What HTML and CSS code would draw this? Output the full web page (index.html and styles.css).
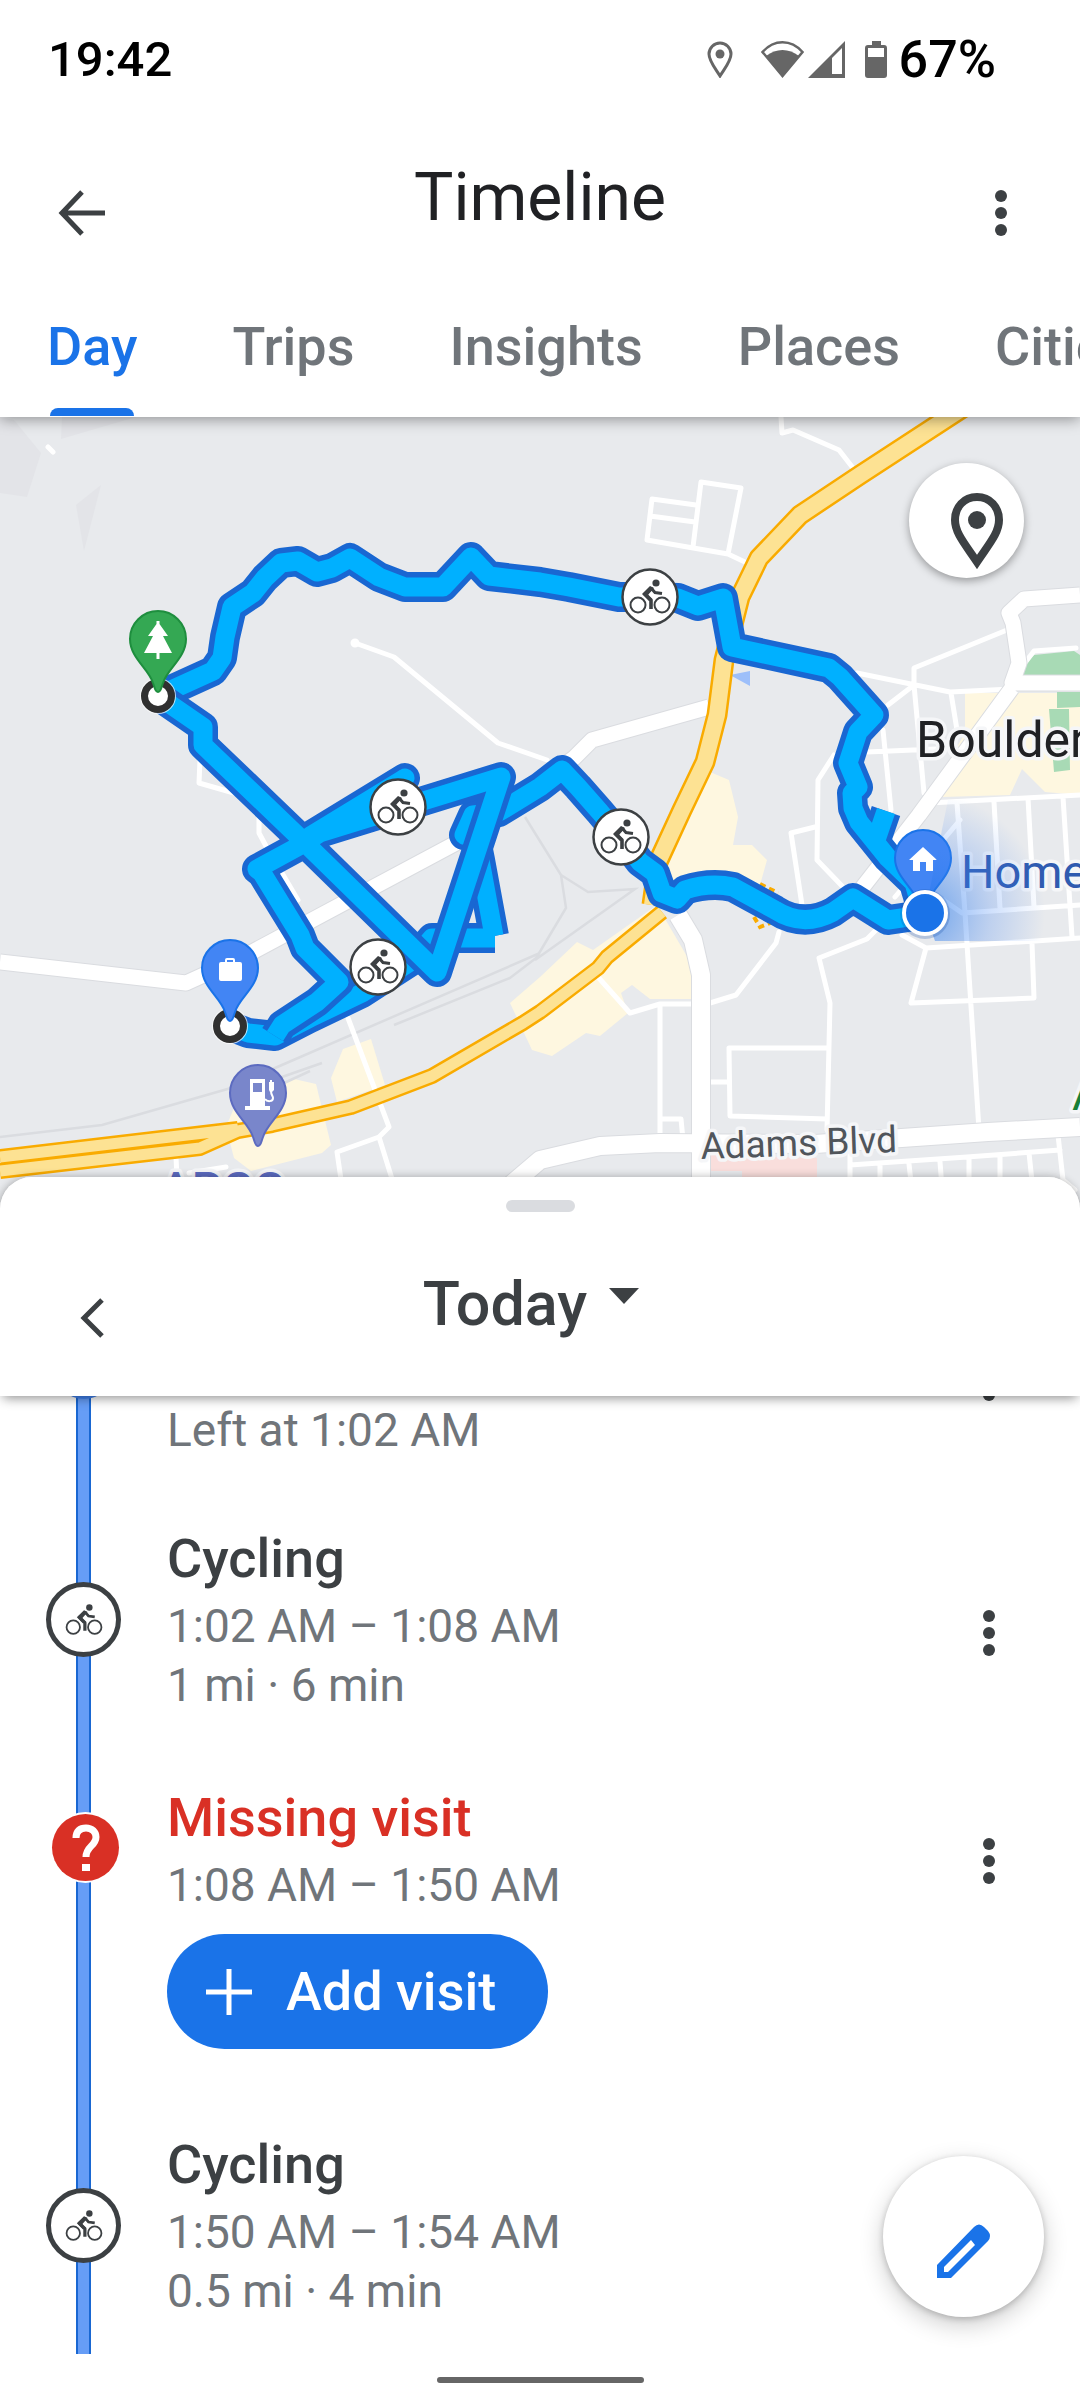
FILE: index.html
```html
<!DOCTYPE html>
<html lang="en">
<head>
	<meta charset="UTF-8">
	<meta name="viewport" content="width=device-width, initial-scale=1">
	<title>Timeline</title>
	<link rel="stylesheet" href="styles.css">
</head>
<body>
	<!-- shared icons -->
	<svg class="defs" width="0" height="0" aria-hidden="true">
		<symbol id="bike" viewBox="-21 -19 42 38">
			<g fill="none" stroke="#3c4043">
				<circle cx="-12" cy="8" r="7.500" stroke-width="2"/>
				<circle cx="12" cy="8" r="7.500" stroke-width="2"/>
				<path d="M2-9L-5-3L1 3V12" stroke-width="3.600" stroke-linejoin="round"/>
				<path d="M1-9L5-4.500L12-3.500" stroke-width="3"/>
			</g>
			<path d="M-8-3L0-11L4-9L-2-2L2 2L-1 4z" fill="#3c4043"/>
			<circle cx="6" cy="-14" r="3.600" fill="#3c4043"/>
		</symbol>
		<symbol id="dots" viewBox="0 0 12 46">
			<circle cx="6" cy="6" r="6"/>
			<circle cx="6" cy="23" r="6"/>
			<circle cx="6" cy="40" r="6"/>
		</symbol>
	</svg>

	<header class="top">
		<div class="status">
			<span class="clock">19:42</span>
			<div class="status-icons">
				<svg class="s-pin" width="26" height="37" viewBox="0 0 26 37"><path d="M13 2C7 2 2 7 2 13C2 20 8 27 13 35C18 27 24 20 24 13C24 7 19 2 13 2z" fill="none" stroke="#666" stroke-width="3"/><circle cx="13" cy="13" r="4.500" fill="#666"/></svg>
				<svg class="s-wifi" width="43" height="37" viewBox="0 0 43 37"><path d="M1.500 11C13-2 30-2 41.500 11L21.500 35z" fill="#fff" stroke="#666" stroke-width="2.500"/><path d="M5 15C15 7 28 7 38 15L21.500 36z" fill="#666"/></svg>
				<svg class="s-signal" width="37" height="37" viewBox="0 0 37 37"><path d="M0 37L37 0V37z" fill="#666"/><path d="M24 17L34 7V33H24z" fill="#fff"/></svg>
				<svg class="s-battery" width="22" height="37" viewBox="0 0 22 37"><path d="M7 0h9v4h3a3 3 0 0 1 3 3v27a3 3 0 0 1-3 3H3a3 3 0 0 1-3-3V7a3 3 0 0 1 3-3h4z" fill="#666"/><path d="M3 7h16v9H3z" fill="#fff"/></svg>
				<span class="percent">67%</span>
			</div>
		</div>
		<div class="appbar">
			<button class="icon-btn back" aria-label="Back">
				<svg width="48" height="46" viewBox="0 0 48 46"><path d="M24 2L4 23L24 44M4 23H47" fill="none" stroke="#3c4043" stroke-width="5"/></svg>
			</button>
			<h1>Timeline</h1>
			<button class="icon-btn more" aria-label="More options"><svg width="12" height="46"><use href="#dots"/></svg></button>
		</div>
		<nav class="tabs">
			<a href="#day" class="active">Day</a>
			<a href="#trips">Trips</a>
			<a href="#insights">Insights</a>
			<a href="#places">Places</a>
			<a href="#cities">Cities</a>
		</nav>
	</header>

	<div class="map">
		<svg class="map-svg" viewBox="0 417 1080 793">
			<defs>
				<path id="pin" d="M0-1C-3-1-3-5-5-10C-9-24-28-35-28-54A28 28 0 0 1 28-54C28-35 9-24 5-10C3-5 3-1 0-1z" stroke-width="2"/>
				<g id="ring">
					<circle r="18" fill="#fff" opacity=".7"/>
					<circle r="13.500" fill="#fff" stroke="#303030" stroke-width="7"/>
				</g>
				<g id="stop">
					<circle r="27.500" fill="#fff" stroke="#3c4043" stroke-width="2.500"/>
					<use href="#bike" x="-21" y="-19" width="42" height="38"/>
				</g>
				<radialGradient id="beam" gradientUnits="userSpaceOnUse" cx="925" cy="913" r="120">
					<stop offset="0" stop-color="#1a73e8" stop-opacity=".6"/>
					<stop offset=".55" stop-color="#4285f4" stop-opacity=".25"/>
					<stop offset="1" stop-color="#4285f4" stop-opacity="0"/>
				</radialGradient>
				<g id="highways" fill="none" stroke-linejoin="round">
					<path class="hw-wide" d="M975 400L860 475L800 515L759 558L740 597L724 660L717 715L705 762L682 810L658 862L652 905"/>
					<path class="hw" d="M662 912L607 957L598 968L540 1012L523 1023L432 1076L351 1107L272 1125L238 1131L200 1148L0 1171M238 1129L0 1157"/>
				</g>
				<g id="routes" fill="none" stroke-linejoin="round">
					<path d="M158 696L213 671L222 658L225 637L232 607L253 593L265 578L281 563L298 561L317 572L332 568L350 558L379 577L405 587L443 587L471 557L489 576L540 582L569 587L619 597L650 597L678 598L698 606L723 598L732 647L829 668L840 677L874 715L858 732L848 763L858 787L852 793L853 808L859 822L888 858L914 883L922 910"/>
					<path d="M876 840L886 811"/>
					<path d="M922 915L888 920L853 898L833 912Q803 928 775 910L733 887Q710 882 685 890L677 899L662 893L655 873L640 862L621 837L600 812L578 787L562 770L540 787L499 812L473 815L464 835L474 830L480 860L494 936"/>
					<path d="M230 1026L248 1033L275 1036L310 1018L362 993L413 960L432 938H495"/>
				</g>
				<path id="zigzag" fill="none" stroke-linejoin="round" d="M275 1036L282 1025L317 1002L339 982L305 948L300 935L262 873L257 869L301 845L405 778L310 836L501 777L437 972L300 838L203 745V727L158 696"/>
			</defs>
			<rect y="417" width="1080" height="793" fill="#e8eaed"/>

			<!-- areas -->
			<path d="M0 417L14 420L41 453L27 497L0 493zM62 417L61 439L136 417zM101 485L76 505L84 551z" fill="#e3e4e8"/>
			<g fill="#fef7e0">
				<path d="M710 772L729 780L738 817L733 845H752L767 860L760 885L660 890L665 850z"/>
				<path d="M657 905L692 965V999H650L632 985L621 993L628 1013L600 1036L586 1033L552 1056L532 1050L510 1003L540 977L577 942L593 950z"/>
				<path d="M294 1079L316 1084L331 1145L322 1153L251 1171L234 1158L226 1127L234 1108z"/>
				<path d="M343 1049L371 1039L385 1085L337 1102L331 1078z"/>
				<path d="M965 693H1080V795L1045 792L1022 769L1010 795L942 797V773L965 733z"/>
			</g>
			<path d="M1034 655L1074 651L1080 655V677L1056 679H1024L1021 675L1025 662zM1057 692H1080V707L1057 708zM1049 709H1069L1070 770L1054 772z" fill="#a8dab5"/>
			<path d="M710 1155L817 1158V1210H742V1171H710z" fill="#f9dedc"/>
			<path d="M730 675L750 671V686z" fill="#9dbffa"/>

			<!-- railway tracks -->
			<path d="M0 1137L102 1125L231 1088L275 1068L540 953M394 1025L510 978L540 955M282 1077L322 1063M282 1084L310 1071M525 817L561 875L566 908L535 960M561 875L588 892L635 889L535 960" fill="none" stroke="#dadce0" stroke-width="2.500"/>

			<!-- small streets -->
			<g class="streets">
				<path d="M781 417L782 433L793 430L839 450L853 468M696 505L652 499L647 540L728 554L747 563M693 547L701 482L741 488L728 554M650 516L695 522"/>
				<path d="M857 673L950 692L1012 689M1007 630L914 668V685L888 705M914 685L924 793M951 693L957 730M883 730L891 810M867 752L936 749M834 755L818 780L817 860L843 887M815 827L791 833L802 905M779 932L776 943L736 995L710 1003"/>
				<path d="M876 930L867 939L819 958L830 1003L827 1130M827 1048H729L730 1116L827 1119M710 1082H729M598 977L630 1013L660 1004H692M660 1004V1140M660 1119H681L683 1140"/>
				<path d="M929 803L1080 795M957 803L965 913L979 1130M994 802L1000 908M1028 798L1034 907M1063 797L1072 937M939 897L962 913L1080 905M902 935L926 948L1080 938M926 948L911 1003L1034 998L1032 943M960 820L895 897"/>
				<path d="M850 1135V1200M850 1165L967 1157L1060 1150M880 1164V1200M909 1164L913 1200M940 1162L943 1200M969 1157V1200M1000 1155V1200M1029 1153L1034 1200M1058 1135L1063 1180L1075 1190"/>
				<path d="M200 760L199 783L234 793M259 817V833L267 848M282 873L298 900M48 447L53 452M355 643L394 657L498 743L547 760M348 1018L389 1127L379 1137L337 1152L344 1200M379 1137L397 1195M176 1157L178 1200M189 1173L226 1167"/>
				<circle cx="355" cy="643" r="2"/>
				<path d="M1024 664L1034 651L1076 648"/>
			</g>

			<!-- main roads: grey casing with the white road on top -->
			<g class="casing">
				<path d="M0 962L186 983L241 958L458 842L574 758L592 740L709 707"/>
				<path class="wide" d="M678 915L693 940L701 975V1210"/>
				<path class="wide" d="M505 1190L540 1160L600 1146L660 1143L815 1144L988 1132L1080 1127"/>
				<path d="M1080 683H1012L1019 663L1013 623L1009 613L1024 599L1080 595M1012 688L919 815L862 888"/>
			</g>
			<g class="road">
				<path d="M0 962L186 983L241 958L458 842L574 758L592 740L709 707"/>
				<path class="wide" d="M678 915L693 940L701 975V1210"/>
				<path class="wide" d="M505 1190L540 1160L600 1146L660 1143L815 1144L988 1132L1080 1127"/>
				<path d="M1080 683H1012L1019 663L1013 623L1009 613L1024 599L1080 595M1012 688L919 815L862 888"/>
			</g>
			<path d="M760 884L778 893M754 917L760 927L773 922" fill="none" stroke="#f9ab00" stroke-width="4" stroke-dasharray="6 4"/>

			<use href="#highways" class="hw-edge"/>
			<use href="#highways" class="hw-fill"/>

			<g class="labels">
				<text x="916" y="757" font-size="50" fill="#202124">Boulder</text>
				<text x="961" y="888" font-size="47" fill="#2f5bb0">Home</text>
				<text x="701" y="1159" font-size="37" fill="#50555b" transform="rotate(-2 701 1159)">Adams Blvd</text>
				<text x="1072" y="1110" font-size="47" fill="#188038">A</text>
				<text x="160" y="1206" font-size="48" font-weight="500" fill="#5c6bc0">ARCO</text>
			</g>

			<!-- recorded path -->
			<use href="#routes" stroke="#1967d2" stroke-width="30"/>
			<use href="#routes" stroke="#00b0ff" stroke-width="19"/>
			<use href="#zigzag" stroke="#1967d2" stroke-width="30"/>
			<use href="#zigzag" stroke="#00b0ff" stroke-width="19"/>

			<use href="#ring" x="158" y="696"/>
			<use href="#ring" x="230" y="1026"/>
			<use href="#stop" x="650" y="597"/>
			<use href="#stop" x="398" y="807"/>
			<use href="#stop" x="378" y="967"/>
			<use href="#stop" x="621" y="837"/>

			<g transform="translate(158 693)">
				<use href="#pin" fill="#34a853" stroke="#1e8e3e"/>
				<path d="M-1.500-72h3v3L10-57H5L14-40H1.500v6h-3v-6H-14L-5-57H-10L-1.500-69z" fill="#fff"/>
			</g>
			<g transform="translate(230 1022)">
				<use href="#pin" fill="#4285f4" stroke="#1a73e8"/>
				<path d="M-9-60h4v-2q0-2 2-2h6q2 0 2 2v2h5q2 0 2 2v15q0 2-2 2h-19q-2 0-2-2v-15q0-2 2-2zM-3-62v2h6v-2z" fill="#fff" fill-rule="evenodd"/>
			</g>
			<g transform="translate(258 1147)">
				<use href="#pin" fill="#7986cb" stroke="#5c6bc0"/>
				<path d="M-8-68H7v27h5v4H-13v-4h5zM-5-64v9h9v-9z" fill="#fff" fill-rule="evenodd"/>
				<path d="M11-65h1v-2h2v2h2v8l-2 2h-2l-1-2z" fill="#fff"/>
				<path d="M13-56C13-52 15-51 15-49C15-45 9-45 7-48" fill="none" stroke="#fff" stroke-width="2"/>
			</g>
			<g transform="translate(923 912)">
				<use href="#pin" fill="#4285f4" stroke="#1a73e8"/>
				<path d="M0-65L14-52H10V-41H3V-50H-3V-41H-10V-52H-14z" fill="#fff"/>
			</g>
			<path d="M925 913L948 800L1080 800V941H935z" fill="url(#beam)"/>
			<circle cx="925" cy="914" r="25" fill="#174ea6" opacity=".25"/>
			<circle cx="925" cy="913" r="21" fill="#1a73e8" stroke="#fff" stroke-width="4"/>
		</svg>
		<button class="place-btn" aria-label="Show place details">
			<svg width="52" height="76" viewBox="0 0 52 76"><path d="M26 4C13 4 4 14 4 27C4 40 14 51 26 69C38 51 48 40 48 27C48 14 39 4 26 4z" fill="none" stroke="#3c4043" stroke-width="8"/><circle cx="26" cy="27" r="9" fill="#3c4043"/></svg>
		</button>
	</div>

	<main class="sheet">
		<div class="sheet-head">
			<div class="handle"></div>
			<div class="date-row">
				<button class="icon-btn prev" aria-label="Previous day">
					<svg width="24" height="40" viewBox="0 0 24 40"><path d="M22 2L4 20L22 38" fill="none" stroke="#3c4043" stroke-width="5"/></svg>
				</button>
				<button class="date">Today
					<svg width="30" height="16" viewBox="0 0 30 16"><path d="M0 0H30L15 16z" fill="#3c4043"/></svg>
				</button>
			</div>
		</div>

		<ul class="list">
			<li class="item visit">
				<div class="rail"><span class="dot"></span></div>
				<div class="info"><p>Left at 1:02 AM</p></div>
				<button class="icon-btn menu" aria-label="Visit options"><svg width="12" height="46"><use href="#dots"/></svg></button>
			</li>
			<li class="item">
				<div class="rail"><span class="marker"><svg width="38" height="34"><use href="#bike"/></svg></span></div>
				<div class="info">
					<h2>Cycling</h2>
					<p>1:02 AM – 1:08 AM</p>
					<p>1 mi · 6 min</p>
				</div>
				<button class="icon-btn menu" aria-label="Cycling options"><svg width="12" height="46"><use href="#dots"/></svg></button>
			</li>
			<li class="item missing">
				<div class="rail"><span class="question">
					<svg width="30" height="48" viewBox="0 0 30 48"><path d="M5 14C5 7 9 4 15 4C21 4 25 8 25 13C25 22 15 22 15 33" fill="none" stroke="#fff" stroke-width="7"/><path d="M11 40h8v7h-8z" fill="#fff"/></svg>
				</span></div>
				<div class="info">
					<h2>Missing visit</h2>
					<p>1:08 AM – 1:50 AM</p>
					<button class="add">
						<svg width="46" height="46" viewBox="0 0 46 46"><path d="M23 0V46M0 23H46" stroke="#fff" stroke-width="5"/></svg>
						Add visit
					</button>
				</div>
				<button class="icon-btn menu" aria-label="Missing visit options"><svg width="12" height="46"><use href="#dots"/></svg></button>
			</li>
			<li class="item last">
				<div class="rail"><span class="marker"><svg width="38" height="34"><use href="#bike"/></svg></span></div>
				<div class="info">
					<h2>Cycling</h2>
					<p>1:50 AM – 1:54 AM</p>
					<p>0.5 mi · 4 min</p>
				</div>
			</li>
		</ul>

		<button class="fab" aria-label="Edit day">
			<svg width="54" height="54" viewBox="0 0 54 54"><path d="M0 54V41L37 3Q42-2 47 3L51 7Q55 12 51 17L14 54zM7 48H11L38 21L34 16L7 43z" fill="#1a73e8" fill-rule="evenodd"/></svg>
		</button>
	</main>
	<footer class="navbar"><div class="pill"></div></footer>
</body>
</html>
```
FILE: styles.css
```css
* {
	box-sizing: border-box;
	margin: 0;
	padding: 0;
}
body {
	background: #fff;
	color: #3c4043;
	font-family: Roboto, "Liberation Sans", sans-serif;
	overflow-x: hidden;
}
button {
	background: none;
	border: 0;
	font: inherit;
	color: inherit;
	cursor: pointer;
}
svg {
	display: block;
	flex: none;
}
.defs {
	position: absolute;
}
.icon-btn {
	fill: #3c4043;
}

/* header */
.top {
	position: relative;
	z-index: 2;
	background: #fff;
	box-shadow: 0 2px 14px rgba(0, 0, 0, .4);
}
.status {
	display: flex;
	justify-content: space-between;
	align-items: center;
	height: 118px;
	padding: 0 84px 0 48px;
	font-weight: 500;
	color: #000;
}
.clock {
	font-size: 49px;
}
.percent {
	font-size: 52px;
}
.status-icons {
	display: flex;
	align-items: center;
}
.s-pin {
	margin-right: 28px;
}
.s-wifi {
	margin-right: 4px;
}
.s-signal {
	margin-right: 20px;
}
.s-battery {
	margin-right: 12px;
}
.appbar {
	display: flex;
	justify-content: space-between;
	align-items: center;
	height: 160px;
	padding: 0 58px;
}
.appbar .icon-btn {
	padding-top: 30px;
	width: 48px;
}
.appbar .more {
	display: flex;
	justify-content: flex-end;
	padding-right: 15px;
}
h1 {
	font-size: 66px;
	font-weight: 400;
	line-height: 76px;
	color: #202124;
}
.tabs {
	display: flex;
	gap: 95px;
	height: 139px;
	padding: 34px 0 0 47px;
	overflow: hidden;
}
.tabs a {
	flex: none;
	font-size: 54px;
	font-weight: 500;
	line-height: 70px;
	color: #70757a;
	text-decoration: none;
}
.tabs .active {
	color: #1a73e8;
}
.tabs .active::after {
	content: "";
	display: block;
	height: 8px;
	margin: 26px 3px 0;
	border-radius: 8px 8px 0 0;
	background: #1a73e8;
}

/* map */
.map {
	position: relative;
}
.map-svg {
	width: 100%;
	height: auto;
}
.streets {
	fill: none;
	stroke: #fff;
	stroke-width: 5px;
	stroke-linejoin: round;
	stroke-linecap: round;
}
.casing, .road {
	fill: none;
	stroke-linejoin: round;
}
.casing {
	stroke: #dadce0;
	stroke-width: 17px;
}
.casing .wide {
	stroke-width: 20px;
}
.road {
	stroke: #fff;
	stroke-width: 15px;
}
.road .wide {
	stroke-width: 18px;
}
.hw-edge {
	stroke: #f9ab00;
	--wide: 21px;
	--normal: 16px;
}
.hw-fill {
	stroke: #fde293;
	--wide: 16px;
	--normal: 11px;
}
.hw-wide {
	stroke-width: var(--wide);
}
.hw {
	stroke-width: var(--normal);
}
.labels {
	stroke: #f5f6f8;
	stroke-width: 7px;
	stroke-linejoin: round;
	paint-order: stroke;
}
.place-btn {
	position: absolute;
	top: 46px;
	right: 56px;
	width: 115px;
	height: 115px;
	padding: 20px 0 0 42px;
	border-radius: 50%;
	background: #fff;
	box-shadow: 0 3px 8px rgba(0, 0, 0, .35);
}

/* bottom sheet */
.sheet {
	position: relative;
	z-index: 1;
	margin-top: -33px;
	border-radius: 32px 32px 0 0;
	background: #fff;
	box-shadow: 0 -1px 8px rgba(0, 0, 0, .2);
}
.sheet-head {
	position: relative;
	z-index: 1;
	padding-top: 23px;
	border-radius: 32px 32px 0 0;
	background: #fff;
	box-shadow: 0 5px 12px -3px rgba(0, 0, 0, .45);
}
.handle {
	width: 69px;
	height: 12px;
	margin: 0 auto;
	border-radius: 6px;
	background: #dadce0;
}
.date-row {
	display: grid;
	grid-template-columns: 1fr auto 1fr;
	align-items: center;
	height: 184px;
	padding: 0 98px 0 80px;
}
.prev {
	justify-self: start;
	padding-top: 28px;
}
.date {
	display: flex;
	gap: 22px;
	font-size: 61px;
	font-weight: 500;
	line-height: 68px;
}
.date svg {
	margin-top: 18px;
}

/* day entries */
.list {
	overflow: hidden;
	list-style: none;
}
.item {
	display: grid;
	grid-template-columns: 167px 1fr 97px;
	align-items: start;
}
.rail {
	align-self: stretch;
	background: linear-gradient(90deg, #1967d2 2px, #669df6 2px, #669df6 13px, #1967d2 13px) 76px 0 / 15px 100% no-repeat;
}
.marker, .question {
	display: flex;
	justify-content: center;
	align-items: center;
	border-radius: 50%;
}
.marker {
	width: 75px;
	height: 75px;
	margin: 61px 0 0 46px;
	border: 5px solid #3c4043;
	background: #fff;
}
.question {
	width: 67px;
	height: 67px;
	margin: 34px 0 0 52px;
	background: #d93025;
	box-shadow: 0 0 0 2px #fff;
}
.dot {
	display: block;
	width: 60px;
	height: 60px;
	margin: -57px 0 0 54px;
	border-radius: 50%;
	background: #4285f4;
}
.info {
	padding-bottom: 65px;
}
.info h2 {
	font-size: 54px;
	font-weight: 500;
	line-height: 76px;
}
.info p {
	font-size: 46px;
	line-height: 59px;
	color: #70757a;
}
.menu {
	width: 12px;
	margin-top: 89px;
}
.visit .info {
	padding: 5px 0 61px;
}
.visit .menu {
	margin-top: -41px;
}
.missing h2 {
	color: #d93025;
}
.missing .info {
	padding-bottom: 78px;
}
.missing .menu {
	margin-top: 58px;
}
.last .info {
	padding-bottom: 33px;
}
.add {
	display: flex;
	align-items: center;
	gap: 34px;
	height: 115px;
	margin-top: 19px;
	padding: 0 52px 0 39px;
	border-radius: 58px;
	background: #1a73e8;
	color: #fff;
	font-size: 54px;
	font-weight: 500;
}
.fab {
	position: absolute;
	right: 36px;
	bottom: 37px;
	width: 161px;
	height: 161px;
	padding: 28px 0 0 54px;
	border-radius: 50%;
	background: #fff;
	box-shadow: 0 8px 24px rgba(0, 0, 0, .2), 0 2px 6px rgba(0, 0, 0, .2);
}

/* gesture bar */
.navbar {
	position: relative;
	z-index: 2;
	display: flex;
	justify-content: center;
	height: 46px;
	padding-top: 23px;
	background: #fff;
}
.pill {
	width: 207px;
	height: 6px;
	border-radius: 3px;
	background: #666;
}
```
